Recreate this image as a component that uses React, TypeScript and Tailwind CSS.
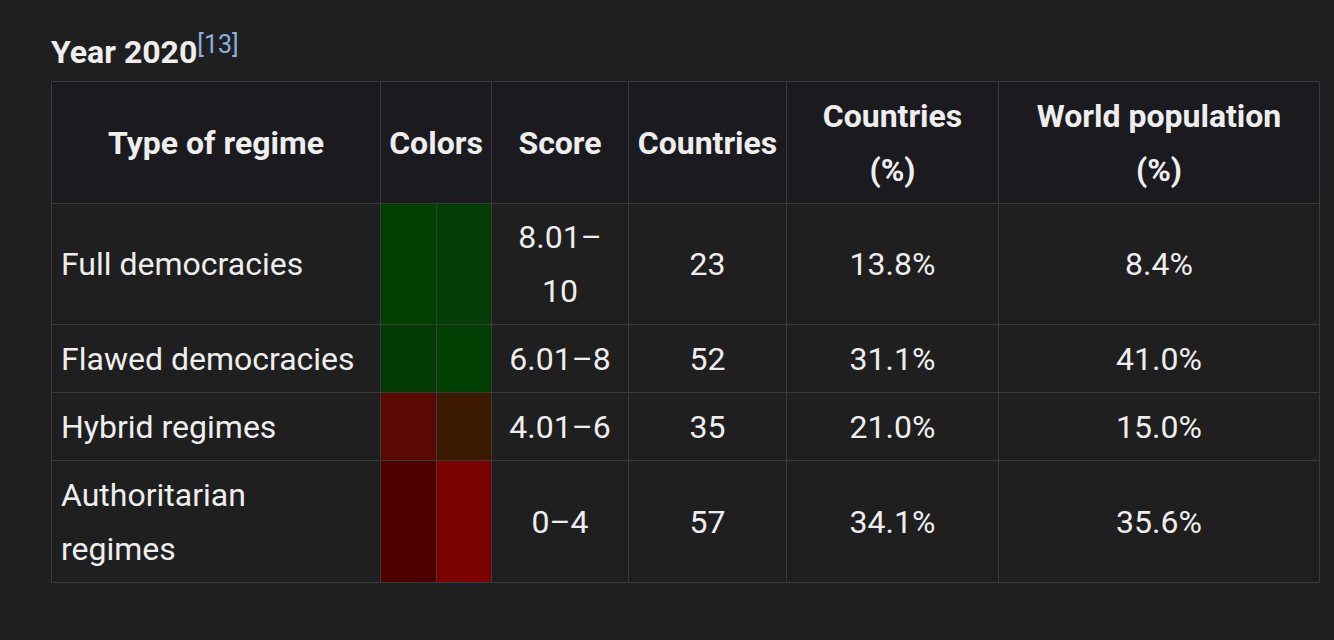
const rows = [
  { type: ["Full democracies"], c1: "bg-[#013f02]", c2: "bg-[#033d05]", score: ["8.01–", "10"], n: "23", pc: "13.8%", pop: "8.4%", h: "h-[121px]" },
  { type: ["Flawed democracies"], c1: "bg-[#023a03]", c2: "bg-[#023f02]", score: ["6.01–8"], n: "52", pc: "31.1%", pop: "41.0%", h: "h-[68px]" },
  { type: ["Hybrid regimes"], c1: "bg-[#5a0a02]", c2: "bg-[#3c1a02]", score: ["4.01–6"], n: "35", pc: "21.0%", pop: "15.0%", h: "h-[68px]" },
  { type: ["Authoritarian", "regimes"], c1: "bg-[#4e0000]", c2: "bg-[#7c0101]", score: ["0–4"], n: "57", pc: "34.1%", pop: "35.6%", h: "h-[122px]" },
];

export default function App() {
  return (
    <div className="w-[1334px] h-[640px] bg-[#1f1f1f] text-[#eeeeee] font-['Roboto',sans-serif] pl-[51px] pt-[30px]">
      <div className="text-[32px] font-bold leading-[44px] h-[51px]">
        Year 2020<sup className="text-[25px] font-normal text-[#8eaee0] align-[10px] leading-none top-0">[13]</sup>
      </div>
      <table className="border-collapse text-[32px] leading-[54px] table-fixed w-[1268px]">
        <colgroup>
          <col className="w-[329px]" />
          <col className="w-[56px]" />
          <col className="w-[55px]" />
          <col className="w-[137px]" />
          <col className="w-[158px]" />
          <col className="w-[212px]" />
          <col className="w-[321px]" />
        </colgroup>
        <thead>
          <tr className="h-[122px] bg-[#1b1b1f] font-bold">
            <th className="border border-[#3a3a3e] px-1 font-bold">Type of regime</th>
            <th colSpan={2} className="border border-[#3a3a3e] px-0 font-bold">Colors</th>
            <th className="border border-[#3a3a3e] px-1 font-bold">Score</th>
            <th className="border border-[#3a3a3e] px-0 font-bold">Countries</th>
            <th className="border border-[#3a3a3e] px-1 font-bold">Countries<br />(%)</th>
            <th className="border border-[#3a3a3e] px-1 font-bold">World population<br />(%)</th>
          </tr>
        </thead>
        <tbody>
          {rows.map((r) => (
            <tr key={r.type[0]} className={r.h}>
              <td className="border border-[#3a3a3e] pl-[9px] pr-2">
                {r.type.map((t, i) => (
                  <div key={i}>{t}</div>
                ))}
              </td>
              <td className={`border border-[#3a3a3e] ${r.c1}`}></td>
              <td className={`border border-[#3a3a3e] ${r.c2}`}></td>
              <td className="border border-[#3a3a3e] text-center">
                {r.score.map((s, i) => (
                  <div key={i}>{s}</div>
                ))}
              </td>
              <td className="border border-[#3a3a3e] text-center">{r.n}</td>
              <td className="border border-[#3a3a3e] text-center">{r.pc}</td>
              <td className="border border-[#3a3a3e] text-center">{r.pop}</td>
            </tr>
          ))}
        </tbody>
      </table>
    </div>
  );
}
